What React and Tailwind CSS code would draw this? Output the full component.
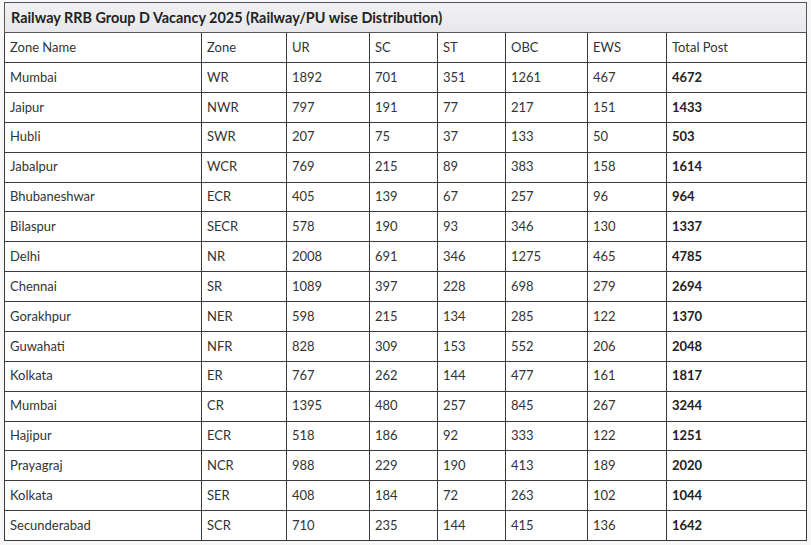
import React from 'react';

const rows = [
  ['Mumbai', 'WR', '1892', '701', '351', '1261', '467', '4672'],
  ['Jaipur', 'NWR', '797', '191', '77', '217', '151', '1433'],
  ['Hubli', 'SWR', '207', '75', '37', '133', '50', '503'],
  ['Jabalpur', 'WCR', '769', '215', '89', '383', '158', '1614'],
  ['Bhubaneshwar', 'ECR', '405', '139', '67', '257', '96', '964'],
  ['Bilaspur', 'SECR', '578', '190', '93', '346', '130', '1337'],
  ['Delhi', 'NR', '2008', '691', '346', '1275', '465', '4785'],
  ['Chennai', 'SR', '1089', '397', '228', '698', '279', '2694'],
  ['Gorakhpur', 'NER', '598', '215', '134', '285', '122', '1370'],
  ['Guwahati', 'NFR', '828', '309', '153', '552', '206', '2048'],
  ['Kolkata', 'ER', '767', '262', '144', '477', '161', '1817'],
  ['Mumbai', 'CR', '1395', '480', '257', '845', '267', '3244'],
  ['Hajipur', 'ECR', '518', '186', '92', '333', '122', '1251'],
  ['Prayagraj', 'NCR', '988', '229', '190', '413', '189', '2020'],
  ['Kolkata', 'SER', '408', '184', '72', '263', '102', '1044'],
  ['Secunderabad', 'SCR', '710', '235', '144', '415', '136', '1642'],
];

const headers = ['Zone Name', 'Zone', 'UR', 'SC', 'ST', 'OBC', 'EWS', 'Total Post'];
const widths = [197, 85, 83, 68, 68, 82, 79, 140];

function App() {
  return (
    <div className="w-[811px] h-[545px] bg-[#f7f7f7] pt-[2px] pl-[4px]" style={{ fontFamily: 'Lato, "Open Sans", sans-serif' }}>
      <table className="table-fixed border-collapse w-[802px] bg-white text-[13px] text-[#333]">
        <colgroup>
          {widths.map((w, i) => (
            <col key={i} style={{ width: w }} />
          ))}
        </colgroup>
        <thead>
          <tr className="h-[30px]">
            <th colSpan={8} className="border border-[#55555e] bg-gradient-to-b from-[#f0f0f2] to-[#e8e8ea] px-[6px] text-left text-[14.4px] font-bold text-[#222]">
              Railway RRB Group D Vacancy 2025 (Railway/PU wise Distribution)
            </th>
          </tr>
          <tr className="h-[30px]">
            {headers.map((h) => (
              <th key={h} className="border border-[#3a3a3a] px-[5px] text-left font-normal text-[#333]">{h}</th>
            ))}
          </tr>
        </thead>
        <tbody>
          {rows.map((r, i) => (
            <tr key={i} className="h-[29.875px]">
              {r.map((c, j) => (
                <td key={j} className={'border border-[#3a3a3a] px-[5px] ' + (j === 7 ? 'font-bold text-[#222]' : '')}>{c}</td>
              ))}
            </tr>
          ))}
        </tbody>
      </table>
    </div>
  );
}

export default App;
